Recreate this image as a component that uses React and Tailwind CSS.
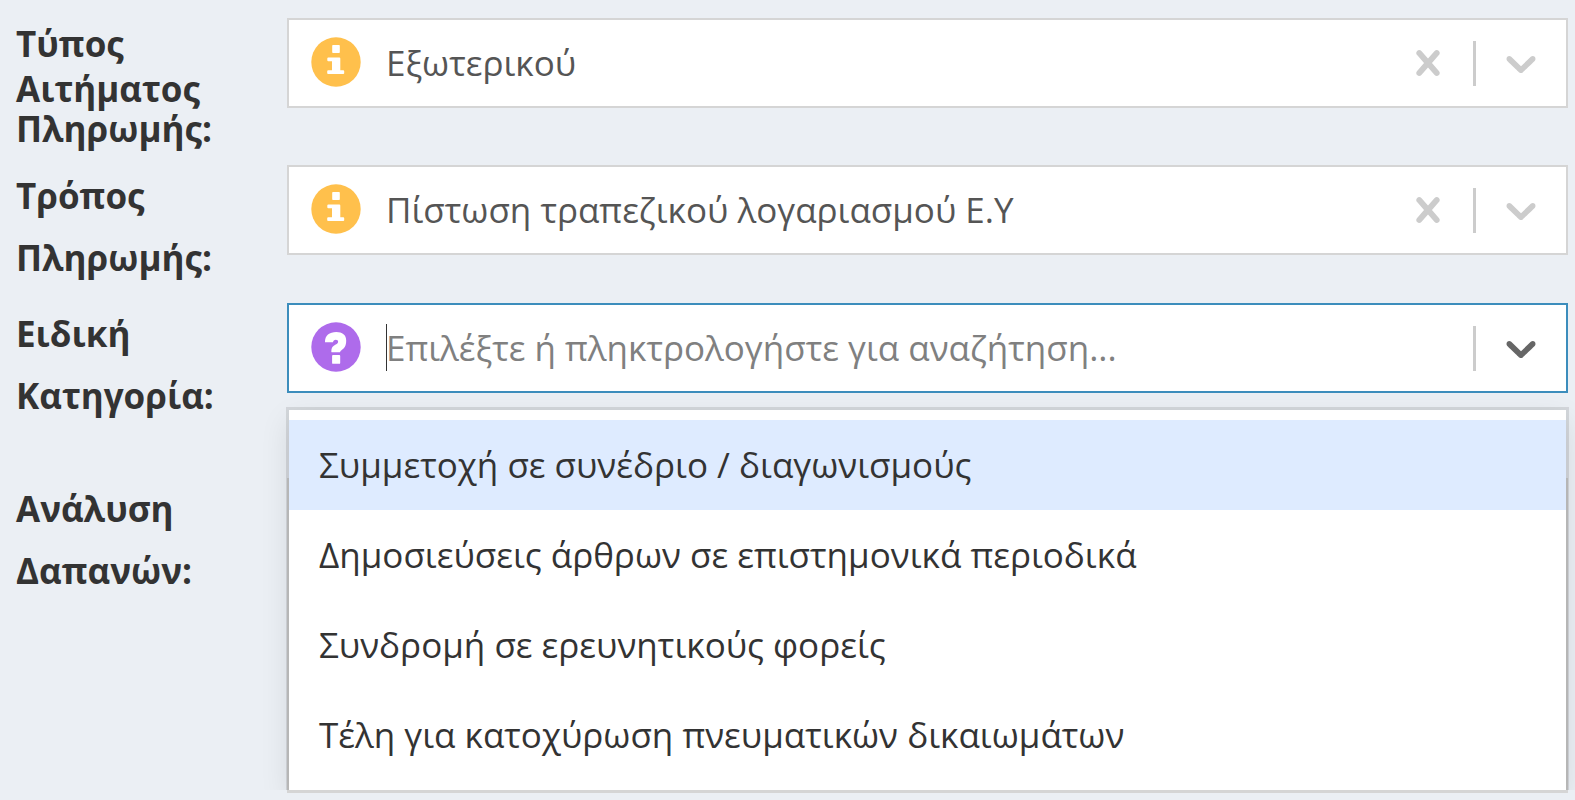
import { useState } from "react";

const CROSS =
  "M14.348 14.849c-0.469 0.469-1.229 0.469-1.697 0l-2.651-3.030-2.651 3.029c-0.469 0.469-1.229 0.469-1.697 0-0.469-0.469-0.469-1.229 0-1.697l2.758-3.15-2.759-3.152c-0.469-0.469-0.469-1.228 0-1.697s1.228-0.469 1.697 0l2.652 3.031 2.651-3.031c0.469-0.469 1.228-0.469 1.697 0s0.469 1.229 0 1.697l-2.758 3.152 2.758 3.15c0.469 0.469 0.469 1.229 0 1.698z";
const CHEVRON =
  "M4.516 7.548c0.436-0.446 1.043-0.481 1.576 0l3.908 3.747 3.908-3.747c0.533-0.481 1.141-0.446 1.574 0 0.436 0.445 0.408 1.197 0 1.615-0.406 0.418-4.695 4.502-4.695 4.502-0.217 0.223-0.502 0.335-0.787 0.335s-0.57-0.112-0.789-0.335c0 0-4.287-4.084-4.695-4.502s-0.436-1.17 0-1.615z";

const OPTIONS = [
  "Συμμετοχή σε συνέδριο / διαγωνισμούς",
  "Δημοσιεύσεις άρθρων σε επιστημονικά περιοδικά",
  "Συνδρομή σε ερευνητικούς φορείς",
  "Τέλη για κατοχύρωση πνευματικών δικαιωμάτων",
];

function Glyph({ d }) {
  return (
    <svg viewBox="0 0 20 20" className="size-[50px]" fill="currentColor" aria-hidden="true">
      <path d={d} />
    </svg>
  );
}

function InfoIcon() {
  return (
    <svg viewBox="0 0 50 50" className="size-[50px] shrink-0" aria-hidden="true">
      <circle cx="25" cy="25" r="24.7" fill="#ffc04c" />
      <path
        fill="#fff"
        d="M22 8h6q.8 0 .8.8v6.400q0 .8-.8.8h-6q-.8 0-.8-.8v-6.400q0-.8.8-.8zM17.300 20.500h11q1 0 1 1v11.700h2.900q1 0 1 1v2.100q0 .8-1 .8h-15q-1 0-1-.8v-2.100q0-1 1-1h3.800v-8.900h-3.700q-1 0-1-1v-1.800q0-1 1-1z"
      />
    </svg>
  );
}

function QuestionIcon() {
  return (
    <svg viewBox="0 0 50 50" className="size-[50px] shrink-0" aria-hidden="true">
      <circle cx="25" cy="25" r="24.7" fill="#ae6beb" />
      <path
        fill="#fff"
        d="M14 20.300C13.800 13.500 18.500 10 25.300 10c6 0 9.900 2.900 9.900 8.600 0 5.400-1.700 8-5 9.800-.6.4-.8.9-1.300 1.900h-7.700q-.9 0-.9-.9c0-3.800 1.500-5.400 4.400-6.900 1.700-.9 2.400-1.700 2.400-2.800 0-1.200-.9-1.900-2.300-1.900-1.700 0-2.400.9-2.900 2.500zM22 33h6.300q.9 0 .9.900v7q0 .9-.9.900h-6.300q-.9 0-.9-.9v-7q0-.9.9-.9z"
      />
    </svg>
  );
}

function SelectBox({ id, value, onClear, placeholder, active, icon, onToggle, children }) {
  return (
    <div className="relative min-w-0 flex-1">
      <div
        className={
          active
            ? "flex h-[90px] items-center border-2 border-[#3c8dbc] bg-white pl-[22px] pr-[20px]"
            : "flex h-[90px] items-center border-2 border-[#d5d5d5] bg-white pl-[22px] pr-[20px]"
        }
      >
        <div className="flex min-w-0 flex-1 items-center gap-[25px] pb-[2px]">
          {icon}
          <div className="relative flex min-w-0 flex-1 items-center">
            {active && <span className="absolute left-0 h-[47px] w-px bg-[#333]" />}
            <input
              key={value}
              id={id}
              type="text"
              role="combobox"
              aria-expanded={Boolean(active)}
              readOnly={!active}
              defaultValue={value}
              placeholder={placeholder}
              className="h-[60px] w-full bg-transparent text-[35px] text-[#555] outline-none placeholder:text-[#808080]"
            />
          </div>
        </div>
        {value && (
          <button type="button" aria-label="Καθαρισμός" onClick={onClear} className="text-[#ccc]">
            <Glyph d={CROSS} />
          </button>
        )}
        <span className="ml-5 h-[45px] w-[3px] bg-[#ccc]" />
        <button
          type="button"
          aria-label="Άνοιγμα λίστας"
          onClick={onToggle}
          className={active ? "ml-5 text-[#666]" : "ml-5 text-[#ccc]"}
        >
          <Glyph d={CHEVRON} />
        </button>
      </div>
      {children}
    </div>
  );
}

const ROW = "flex items-start pl-4 pr-[7px]";
const LABEL = "w-[271px] shrink-0 text-[35px] font-bold leading-[62px]";

export default function App() {
  const [type, setType] = useState("Εξωτερικού");
  const [method, setMethod] = useState("Πίστωση τραπεζικού λογαριασμού Ε.Υ");
  const [open, setOpen] = useState(true);
  const [focused, setFocused] = useState(0);

  return (
    <form className="min-h-screen bg-[#ebeff4] pt-[18px] font-['Open_Sans',sans-serif] text-[#333]">
      <div className={ROW}>
        <label
          htmlFor="request-type"
          className="w-[271px] shrink-0 pt-[3px] text-[35px] font-bold leading-[45px]"
        >
          <span className="block">Τύπος</span>
          <span className="block">Αιτήματος</span>
          <span className="block leading-[35px]">Πληρωμής:</span>
        </label>
        <SelectBox id="request-type" value={type} onClear={() => setType("")} icon={<InfoIcon />} />
      </div>

      <div className={`${ROW} mt-[19px]`}>
        <label htmlFor="payment-method" className={LABEL}>
          Τρόπος
          <br />
          Πληρωμής:
        </label>
        <SelectBox id="payment-method" value={method} onClear={() => setMethod("")} icon={<InfoIcon />} />
      </div>

      <div className={`${ROW} mt-[14px]`}>
        <label htmlFor="special-category" className={LABEL}>
          Ειδική
          <br />
          Κατηγορία:
        </label>
        <SelectBox
          id="special-category"
          active
          placeholder="Επιλέξτε ή πληκτρολογήστε για αναζήτηση..."
          icon={<QuestionIcon />}
          onToggle={() => setOpen(!open)}
        >
          {open && (
            <ul
              role="listbox"
              aria-label="Ειδική Κατηγορία"
              className="absolute inset-x-[2px] top-full z-10 mt-[17px] bg-white py-[10px] shadow-[0_0_0_3px_rgba(0,0,0,0.1),0_10px_28px_rgba(0,0,0,0.1)] [clip-path:inset(-40px_-40px_0_-40px)]"
            >
              {OPTIONS.map((option, i) => (
                <li
                  key={option}
                  role="option"
                  aria-selected={i === focused}
                  onMouseEnter={() => setFocused(i)}
                  className={
                    i === focused
                      ? "bg-[#deebff] px-[30px] text-[35px] leading-[90px]"
                      : "px-[30px] text-[35px] leading-[90px]"
                  }
                >
                  {option}
                </li>
              ))}
            </ul>
          )}
        </SelectBox>
      </div>

      <div className={`${ROW} mt-[51px]`}>
        <div className={LABEL}>
          Ανάλυση
          <br />
          Δαπανών:
        </div>
        <div className="h-[315px] flex-1 border-2 border-b-[3px] border-[#d5d5d5] bg-white" />
      </div>
    </form>
  );
}
